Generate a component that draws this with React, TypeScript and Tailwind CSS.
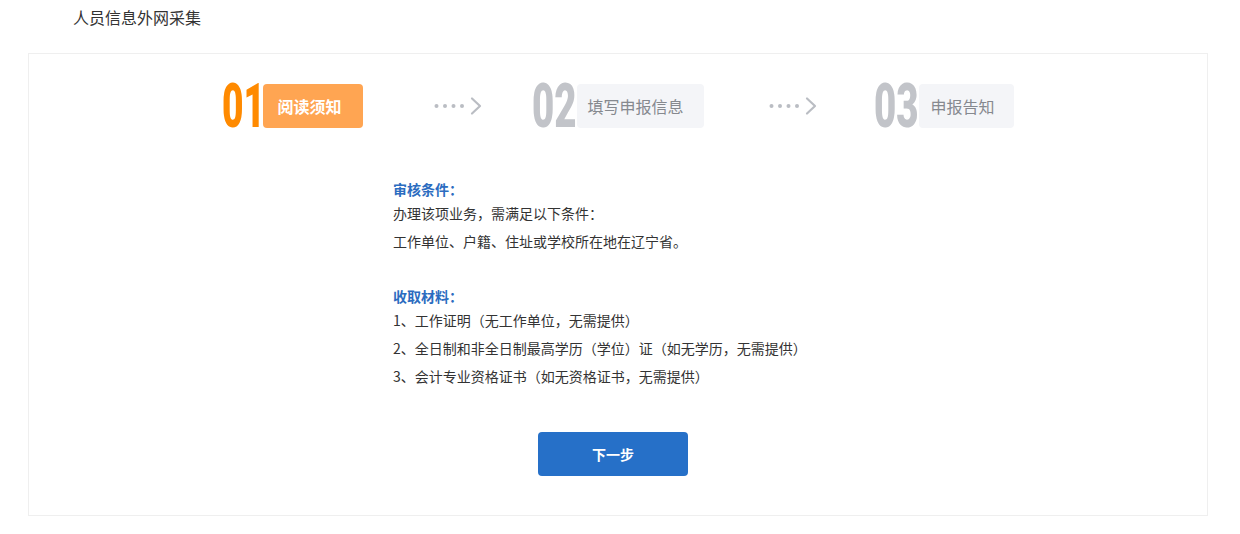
import React from "react";

function Arrow() {
  return (
    <svg width="48" height="20" viewBox="0 0 48 20" className="block">
      {[2.5, 11, 19.5, 28].map((cx) => (
        <circle key={cx} cx={cx} cy="10" r="2" fill="#babdc3" />
      ))}
      <polyline points="38,2.5 46,10 38,17.5" fill="none" stroke="#babdc3" strokeWidth="2.2" strokeLinecap="round" strokeLinejoin="round" />
    </svg>
  );
}

function Num({ n }: { n: string }) {
  return (
    <div className="relative w-[44px] h-[44px] shrink-0">
      <span
        className="absolute left-[-1px] top-0 block origin-left scale-x-[0.62] text-[62px] leading-[44px] font-black text-[#c2c4c9]"
        style={{ fontFamily: "Roboto, 'Liberation Sans', sans-serif" }}
      >
        {n}
      </span>
    </div>
  );
}

export default function App() {
  const cjk = { fontFamily: "'Noto Sans CJK SC', 'Noto Sans', sans-serif" };
  return (
    <div className="w-[1240px] h-[534px] bg-white" style={cjk}>
      <div className="pl-[73px] pt-[5px] h-[53px] text-[16px] leading-[24px] text-[#333]">人员信息外网采集</div>
      <div className="ml-[28px] w-[1180px] h-[463px] border border-[#efefef] pt-[30px]">
        <div className="flex justify-center items-center h-[44px]">
          <div className="flex items-center">
            <div className="w-[40px] h-[44px] relative shrink-0">
              <span
                className="absolute left-[-1px] top-0 block origin-left scale-x-[0.6] text-[62px] leading-[44px] font-black text-[#ff8a00]"
                style={{ fontFamily: "Roboto, 'Liberation Sans', sans-serif" }}
              >
                01
              </span>
            </div>
            <div className="w-[100px] h-[44px] rounded-[4px] bg-[#ffa552] flex items-center pl-[15px] text-[16px] font-bold text-white">阅读须知</div>
          </div>
          <div className="ml-[71px] mr-[51px]"><Arrow /></div>
          <div className="flex items-center">
            <Num n="02" />
            <div className="w-[127px] h-[44px] rounded-[4px] bg-[#f4f5f8] flex items-center pl-[11px] text-[16px] text-[#86898f]">填写申报信息</div>
          </div>
          <div className="ml-[65px] mr-[58px]"><Arrow /></div>
          <div className="flex items-center">
            <Num n="03" />
            <div className="w-[95px] h-[44px] rounded-[4px] bg-[#f4f5f8] flex items-center pl-[12px] text-[16px] text-[#86898f]">申报告知</div>
          </div>
        </div>

        <div className="ml-[364px] mt-[51px] text-[14px] text-[#333]">
          <div className="leading-[20px] font-bold text-[#2b6cc0]">审核条件：</div>
          <div className="leading-[28px]">办理该项业务，需满足以下条件：</div>
          <div className="leading-[28px]">工作单位、户籍、住址或学校所在地在辽宁省。</div>
          <div className="mt-[31px] leading-[20px] font-bold text-[#2b6cc0]">收取材料：</div>
          <div className="leading-[28px]">1、工作证明（无工作单位，无需提供）</div>
          <div className="leading-[28px]">2、全日制和非全日制最高学历（学位）证（如无学历，无需提供）</div>
          <div className="leading-[28px]">3、会计专业资格证书（如无资格证书，无需提供）</div>
        </div>

        <div className="mt-[42px] ml-[509px]">
          <button className="w-[150px] h-[44px] rounded-[4px] bg-[#2670c8] text-white text-[14px] font-bold flex items-center justify-center">下一步</button>
        </div>
      </div>
    </div>
  );
}
